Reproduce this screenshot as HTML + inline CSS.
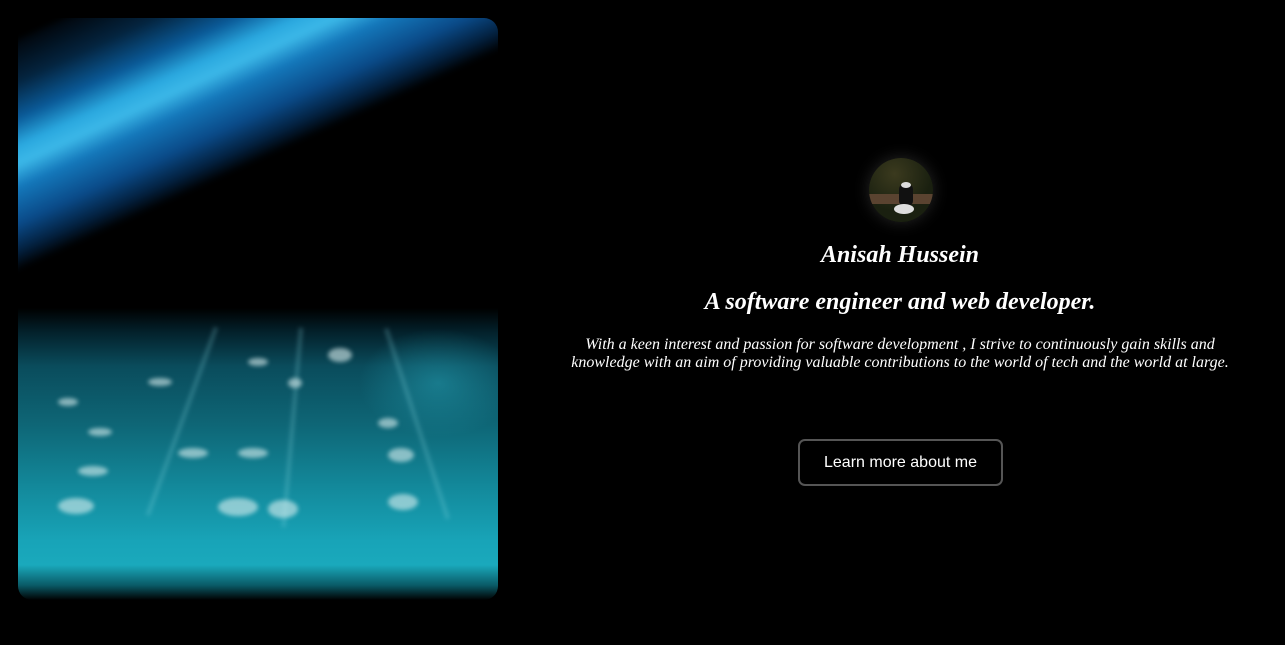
<!DOCTYPE html>
<html><head><style>
html,body{margin:0;padding:0;background:#000;width:1285px;height:645px;overflow:hidden}
.img{position:absolute;left:18px;top:18px;width:480px;height:582px;border-radius:14px;overflow:hidden;background:#000}
.screen{position:absolute;left:-210px;top:-78px;width:900px;height:210px;transform:rotate(-24.6deg);
background:linear-gradient(180deg,#01060c 0%,#04243f 18%,#0a5a98 34%,#2aa8df 46%,#3cb8e8 54%,#1478bb 64%,#0a4a88 80%,#03203e 92%,#000 100%);filter:blur(3px)}
.kb{position:absolute;left:0;top:290px;width:480px;height:292px;
background:linear-gradient(180deg,#000 0%,#03202a 8%,#0a4c5c 20%,#0e6676 40%,#138a9c 62%,#18a4b8 80%,#1aa9bc 88%,#0a5a66 95%,#000 100%)}
.glow{position:absolute;left:340px;top:20px;width:160px;height:110px;background:radial-gradient(ellipse,rgba(40,170,190,.45),transparent 70%)}
.kb i{position:absolute;border-radius:50%;background:rgba(220,240,240,.6);filter:blur(2px)}
.kb b{position:absolute;height:4px;background:rgba(140,220,230,.25);filter:blur(2px);transform-origin:0 0}
.av{position:absolute;left:869px;top:158px;width:64px;height:64px;border-radius:50%;overflow:hidden;background:radial-gradient(circle at 40% 25%,#3b3a1e,#1a2010 60%);box-shadow:0 0 16px rgba(70,70,70,.55)}
.av span{position:absolute}
.r{position:absolute;left:555px;width:690px;text-align:center;color:#fff;font-family:"Liberation Serif",serif;font-style:italic}
.btn{position:absolute;left:798px;top:439px;width:201px;height:43px;border:2px solid #555;border-radius:7px;color:#fff;font:16px "Liberation Sans",sans-serif;display:flex;align-items:center;justify-content:center}
</style></head><body>
<div class="img">
 <div class="screen"></div>
 <div class="kb">
  <div class="glow"></div>
  <b style="left:200px;top:20px;width:200px;transform:rotate(110deg)"></b>
  <b style="left:285px;top:20px;width:200px;transform:rotate(95deg)"></b>
  <b style="left:370px;top:20px;width:200px;transform:rotate(72deg)"></b>
  <i style="left:40px;top:190px;width:36px;height:16px"></i>
  <i style="left:200px;top:190px;width:40px;height:18px"></i>
  <i style="left:250px;top:192px;width:30px;height:18px"></i>
  <i style="left:370px;top:186px;width:30px;height:16px"></i>
  <i style="left:370px;top:140px;width:26px;height:14px"></i>
  <i style="left:360px;top:110px;width:20px;height:10px"></i>
  <i style="left:160px;top:140px;width:30px;height:10px"></i>
  <i style="left:220px;top:140px;width:30px;height:10px"></i>
  <i style="left:60px;top:158px;width:30px;height:10px"></i>
  <i style="left:270px;top:70px;width:14px;height:10px"></i>
  <i style="left:230px;top:50px;width:20px;height:8px"></i>
  <i style="left:310px;top:40px;width:24px;height:14px"></i>
  <i style="left:130px;top:70px;width:24px;height:8px"></i>
  <i style="left:40px;top:90px;width:20px;height:8px"></i>
  <i style="left:70px;top:120px;width:24px;height:8px"></i>
 </div>
</div>
<div class="av">
 <span style="left:0;top:36px;width:64px;height:10px;background:#5a4330"></span>
 <span style="left:30px;top:26px;width:14px;height:22px;background:#111;border-radius:5px"></span>
 <span style="left:32px;top:24px;width:10px;height:6px;background:#ddd;border-radius:50%"></span>
 <span style="left:25px;top:46px;width:20px;height:10px;background:#ddd;border-radius:50%"></span>
</div>
<div class="r" style="top:242px;font-size:24px;font-weight:bold">Anisah Hussein</div>
<div class="r" style="top:289px;font-size:24px;font-weight:bold">A software engineer and web developer.</div>
<div class="r" style="top:336px;font-size:16px;line-height:18px;left:560px;width:680px">With a keen interest and passion for software development , I strive to continuously gain skills and knowledge with an aim of providing valuable contributions to the world of tech and the world at large.</div>
<div class="btn">Learn more about me</div>
</body></html>
